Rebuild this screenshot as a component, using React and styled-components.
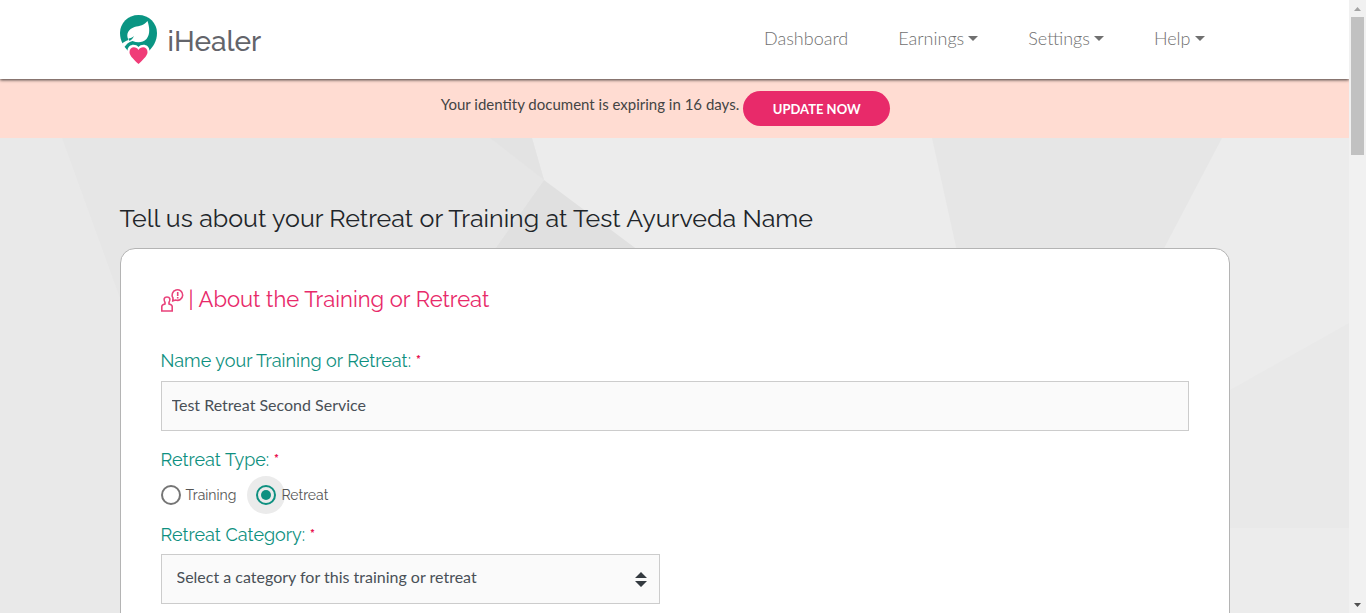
import React, { useState } from "react";
import styled, { createGlobalStyle } from "styled-components";

const GlobalStyle = createGlobalStyle`
  *, *::before, *::after { box-sizing: border-box; }
  body {
    margin: 0;
    color: #212529;
    font-family: "Proxima Nova", "Lato", "Liberation Sans", sans-serif;
    font-size: 16px;
    line-height: 24px;
  }
`;

const Shell = styled.div`
  display: grid;
  grid-template-columns: minmax(0, 1fr) 17px;
  height: 100vh;
  overflow: hidden;
`;

const Page = styled.div`
  display: flex;
  flex-direction: column;
  min-height: 0;
  overflow: hidden;
`;

const Container = styled.div`
  width: 100%;
  max-width: 1140px;
  margin: 0 auto;
  padding: 0 15px;
`;

const Header = styled.header`
  position: relative;
  z-index: 1;
  flex: none;
  background: #fff;
  box-shadow: 0 1px 3px rgba(0, 0, 0, 0.75);
`;

const HeaderRow = styled(Container)`
  display: flex;
  justify-content: space-between;
  height: 79px;
`;

const Brand = styled.a`
  display: flex;
  align-items: center;
  gap: 10px;
  color: #63646a;
  text-decoration: none;
`;

const Wordmark = styled.span`
  padding-top: 4px;
  font: 500 28px/32px "Raleway", "Lato", sans-serif;
`;

const Nav = styled.nav`
  display: flex;
  gap: 50px;
  padding: 26px 25px 0 0;
`;

const NavLink = styled.a`
  display: flex;
  align-items: center;
  gap: 4px;
  height: 24px;
  color: #707070;
  font-size: 18px;
  font-weight: 300;
  text-decoration: none;
`;

const Caret = styled.span`
  border: 5px solid transparent;
  border-top-color: currentColor;
  border-bottom: 0;
`;

const Alert = styled.div`
  display: flex;
  flex: none;
  justify-content: center;
  gap: 4px;
  padding: 12px 18px 12px 0;
  background: #ffdcd2;
  color: #444;
  font-size: 15px;
`;

const AlertText = styled.span`
  line-height: 26px;
`;

const PillButton = styled.button`
  width: 147px;
  height: 35px;
  border: 0;
  border-radius: 18px;
  background: #e82a6a;
  color: #fff;
  font: 700 13px/20px "Proxima Nova", "Lato", sans-serif;
`;

const Main = styled.main`
  display: grid;
  flex: none;
  background: #ececec;
`;

const Facets = styled.svg`
  grid-area: 1 / 1;
  width: 100%;
  height: 476px;
`;

const Content = styled(Container)`
  position: relative;
  grid-area: 1 / 1;
`;

const Title = styled.h1`
  margin: 0;
  padding: 65px 0 14px;
  font: 400 25px/31px "Raleway", "Lato", sans-serif;
`;

const Card = styled.section`
  padding: 34px 40px 40px;
  border: 1px solid #b4b4b4;
  border-radius: 15px;
  background: #fff;
`;

const SectionTitle = styled.h2`
  display: flex;
  align-items: center;
  gap: 5px;
  margin: 0 0 34px;
  color: #e82a6a;
  font: 400 22px/32px "Raleway", "Lato", sans-serif;
`;

const Label = styled.label`
  display: block;
  padding: 0;
  color: #0e9080;
  font: 400 18px/24px "Raleway", "Lato", sans-serif;
`;

const Required = styled.span`
  color: #e8114f;
  font-size: 16px;
  font-weight: 600;
`;

const TextInput = styled.input`
  display: block;
  width: 100%;
  height: 50px;
  margin: 7px 0 17px;
  padding: 0 10px 4px;
  border: 1px solid #ccc;
  border-radius: 0;
  background: #fafafa;
  color: #495057;
  font: 400 16px/24px "Proxima Nova", "Lato", sans-serif;
`;

const Fieldset = styled.fieldset`
  margin: 0;
  padding: 0;
  border: 0;
`;

const Options = styled.div`
  display: flex;
  gap: 20px;
  padding: 10px 0 16px;
`;

const Option = styled.label`
  display: flex;
  align-items: center;
  gap: 5px;
  height: 24px;
  color: #555;
  font: 400 14px/24px "Raleway", "Lato", sans-serif;
`;

const Radio = styled.input`
  appearance: none;
  display: grid;
  place-items: center;
  width: 20px;
  height: 20px;
  margin: 0;
  border: 2px solid #757575;
  border-radius: 50%;

  &:checked {
    border-color: #0e9080;
    background: #ebebeb;
    box-shadow: 0 0 0 9px #ebebeb;
  }

  &:checked::after {
    content: "";
    width: 10px;
    height: 10px;
    border-radius: 50%;
    background: #0e9080;
  }
`;

const OptionText = styled.span`
  position: relative;
`;

const SelectWrap = styled.div`
  display: grid;
  align-items: center;
  width: calc(50% - 15px);
  margin-top: 6px;
`;

const Select = styled.select`
  appearance: none;
  grid-area: 1 / 1;
  width: 100%;
  height: 50px;
  padding: 0 40px 4px 15px;
  border: 1px solid #ccc;
  border-radius: 0;
  background: #fafafa;
  color: #495057;
  font: 400 16px/24px "Proxima Nova", "Lato", sans-serif;
`;

const SelectArrows = styled.svg`
  grid-area: 1 / 1;
  justify-self: end;
  margin-right: 13px;
  pointer-events: none;
`;

const ScrollTrack = styled.div`
  display: flex;
  flex-direction: column;
  align-items: center;
  justify-content: space-between;
  background: #f1f1f1;
`;

const ScrollThumb = styled.div`
  width: 13px;
  height: 138px;
  margin-bottom: auto;
  background: #c1c1c1;
`;

const Logo = () => (
  <svg width="38" height="50" viewBox="0 0 38 50" aria-hidden="true">
    <path d="M18.500 0C8 0 0 8 0 18c0 8 4 14 9 19h19c5-5 9-11 9-19C37 8 29 0 18.500 0Z" fill="#0a9583" />
    <path d="M27.500 6c2 6 3 13-1 18-4 4-9 4-14 2-4 1-6 3-8 6l-3-3c2-2 4-3 7-4-3-6 0-11 6-13 5-1 10-2 13-6Z" fill="#fff" />
    <path d="M8.500 23.500c2 0 4-1 5.500-2.500-1 2-2.500 4-4.500 5Z" fill="#0a9583" />
    <path d="M18.500 50C10 43 7.500 40 7.500 36c0-7 8-8 11-4 3-4 11-3 11 4 0 4-3 8-11 14Z" fill="#fff" />
    <path d="M18.500 49C12 43 9.500 40 9.500 37c0-6 7-6 9-2 2-4 9-4 9 2 0 3-2.500 6-9 12Z" fill="#f03c78" />
  </svg>
);

const PersonIcon = () => (
  <svg width="23" height="26" viewBox="0 0 23 26" fill="none" stroke="#e9437b" strokeWidth="1.600" aria-hidden="true">
    <path d="M.8 25v-4.500C.8 19 2 18.500 4 18v-1.500C2.300 13.500 3 11 6 11s3.700 2.500 2 5.500V18c2 .5 3.200 1 3.200 2.500V25Z" />
    <path d="M11.800 14.800 12 12A5.300 5.300 0 1 1 14.500 14Z" />
    <path d="M16.700 6v4M16.700 11v1.400" />
  </svg>
);

export default function App() {
  const [kind, setKind] = useState("retreat");
  return (
    <Shell>
      <GlobalStyle />
      <Page>
        <Header>
          <HeaderRow>
            <Brand href="#"><Logo /><Wordmark>iHealer</Wordmark></Brand>
            <Nav>
              <NavLink href="#">Dashboard</NavLink>
              <NavLink href="#">Earnings<Caret /></NavLink>
              <NavLink href="#">Settings<Caret /></NavLink>
              <NavLink href="#">Help<Caret /></NavLink>
            </Nav>
          </HeaderRow>
        </Header>
        <Alert>
          <AlertText>Your identity document is expiring in 16 days.</AlertText>
          <PillButton type="button">UPDATE NOW</PillButton>
        </Alert>
        <Main>
          <Facets viewBox="0 0 1349 476" preserveAspectRatio="none" aria-hidden="true">
            <path d="M0 0h62l58 117v359H0Z" fill="#e9e9e9" />
            <path d="M62 0h470l12 42-54 76v358H120V160Z" fill="#e6e6e6" />
            <path d="M490 0h42l12 42Z" fill="#e3e3e3" />
            <path d="M544 42l102 76H490Z" fill="#e0e0e0" />
            <path d="M932 0h290l-62 118H958Z" fill="#e6e6e6" />
            <path d="M1349 185v205h-119V252Z" fill="#e9e9e9" />
          </Facets>
          <Content>
            <Title>Tell us about your Retreat or Training at Test Ayurveda Name</Title>
            <Card>
              <SectionTitle><PersonIcon />| About the Training or Retreat</SectionTitle>
              <Label htmlFor="name">Name your Training or Retreat: <Required>*</Required></Label>
              <TextInput id="name" defaultValue="Test Retreat Second Service" />
              <Fieldset>
                <Label as="legend">Retreat Type: <Required>*</Required></Label>
                <Options>
                  <Option>
                    <Radio type="radio" name="kind" checked={kind === "training"} onChange={() => setKind("training")} />
                    <OptionText>Training</OptionText>
                  </Option>
                  <Option>
                    <Radio type="radio" name="kind" checked={kind === "retreat"} onChange={() => setKind("retreat")} />
                    <OptionText>Retreat</OptionText>
                  </Option>
                </Options>
              </Fieldset>
              <Label htmlFor="category">Retreat Category: <Required>*</Required></Label>
              <SelectWrap>
                <Select id="category">
                  <option>Select a category for this training or retreat</option>
                </Select>
                <SelectArrows width="12" height="15" viewBox="0 0 12 15" fill="#343a40">
                  <path d="M0 6h12L6 0ZM0 9h12l-6 6Z" />
                </SelectArrows>
              </SelectWrap>
            </Card>
          </Content>
        </Main>
      </Page>
      <ScrollTrack aria-hidden="true">
        <svg width="17" height="17" viewBox="0 0 17 17"><path d="M5 11h7L8.500 7Z" fill="#a3a3a3" /></svg>
        <ScrollThumb />
        <svg width="17" height="17" viewBox="0 0 17 17"><path d="M5 7h7l-3.500 4Z" fill="#505050" /></svg>
      </ScrollTrack>
    </Shell>
  );
}
